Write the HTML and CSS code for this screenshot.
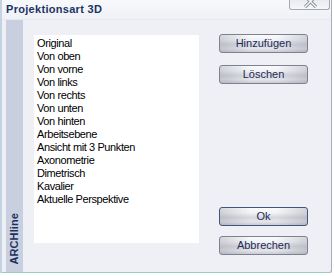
FILE: index.html
```html
<!DOCTYPE html>
<html>
<head>
<title>Projektionsart 3D</title>
<link rel="stylesheet" href="styles.css">
</head>
<body>

<!-- DIALOG WINDOW -->
<div class="window">

<div class="titlebar">
<span class="title">Projektionsart 3D</span>
<span class="close">
<svg width="14" height="9" viewBox="0 0 14 9">
<path d="M1 -4 L12 7 M12 -4 L1 7" stroke="#8c919c" stroke-width="3.2" fill="none"/>
<path d="M1 -4 L12 7 M12 -4 L1 7" stroke="#f4f5f8" stroke-width="1.4" fill="none"/>
</svg>
</span>
</div>

<div class="frame">

<div class="brand"><span>ARCHline</span></div>

<div class="list">
<div class="item">Original</div>
<div class="item">Von oben</div>
<div class="item">Von vorne</div>
<div class="item">Von links</div>
<div class="item">Von rechts</div>
<div class="item">Von unten</div>
<div class="item">Von hinten</div>
<div class="item">Arbeitsebene</div>
<div class="item">Ansicht mit 3 Punkten</div>
<div class="item">Axonometrie</div>
<div class="item">Dimetrisch</div>
<div class="item">Kavalier</div>
<div class="item">Aktuelle Perspektive</div>
</div>

<div class="buttons">
<div class="btn">Hinzufügen</div>
<div class="btn gap">Löschen</div>
<div class="btn default ok">Ok</div>
<div class="btn gap2">Abbrechen</div>
</div>

</div>
</div>
<!-- END DIALOG WINDOW -->

</body>
</html>
```

FILE: styles.css
```css
body { margin: 0; background: #ffffff; font-family: "Liberation Sans", Arial, sans-serif; font-size: 11px }

.window { width: 332px; height: 273px; box-sizing: border-box; border-left: 2px solid #c4d3e1; border-right: 1px solid #a9adb8; border-bottom: 1px solid #9ccbbf; border-bottom-right-radius: 3px; box-shadow: 0 1px 0 #d9dce2; background: #eff0f6 }

.titlebar { height: 20px; display: flex; align-items: flex-start; background: linear-gradient(to bottom, #f8f9fb, #f0f1f6); border-bottom: 1px solid #e6e8ef; box-sizing: border-box }
.title { margin: 3px 0 0 4px; font-weight: bold; font-size: 11px; letter-spacing: 0.3px; color: #1b3461; line-height: 13px }
.close { margin-left: auto; margin-right: 1px; width: 41px; height: 10px; box-sizing: border-box; border: 1px solid #a3a8b3; border-top: none; border-radius: 0 0 3px 3px; background: linear-gradient(to bottom, #e9ebf0, #f6f7fa); display: flex; justify-content: center }
.close svg { display: block; margin-left: 2px }

.frame { display: flex; height: 252px; padding-left: 4px }

.brand { width: 17px; background: #c8d0df; display: flex; flex-direction: column; justify-content: flex-end; padding-bottom: 7px; box-sizing: border-box }
.brand span { writing-mode: vertical-rl; transform: rotate(180deg); font-weight: bold; font-size: 11px; line-height: 16px; color: #1d2f5c; letter-spacing: 0.1px }

.list { margin: 15px 0 0 11px; width: 165px; height: 208px; background: #ffffff; padding: 2px 0 0 3px; box-sizing: border-box }
.item { line-height: 13px; color: #000000; white-space: nowrap; letter-spacing: -0.4px }

.buttons { margin: 14px 0 0 20px; display: flex; flex-direction: column }
.btn { width: 89px; height: 19px; box-sizing: border-box; border: 1px solid #7d828e; border-radius: 3px; text-align: center; line-height: 17px; color: #1e2a58;
  background: linear-gradient(to right, rgba(140,142,155,0.35), rgba(255,255,255,0) 35%, rgba(255,255,255,0) 65%, rgba(140,142,155,0.35)),
              linear-gradient(to bottom, #fbfbfd 0%, #f1f2f5 30%, #d6d8de 55%, #e4e5ea 80%, #c9cbd2 100%) }
.btn.default { border-color: #46547a }
.gap { margin-top: 12px }
.ok { margin-top: 123px }
.gap2 { margin-top: 10px }
```
